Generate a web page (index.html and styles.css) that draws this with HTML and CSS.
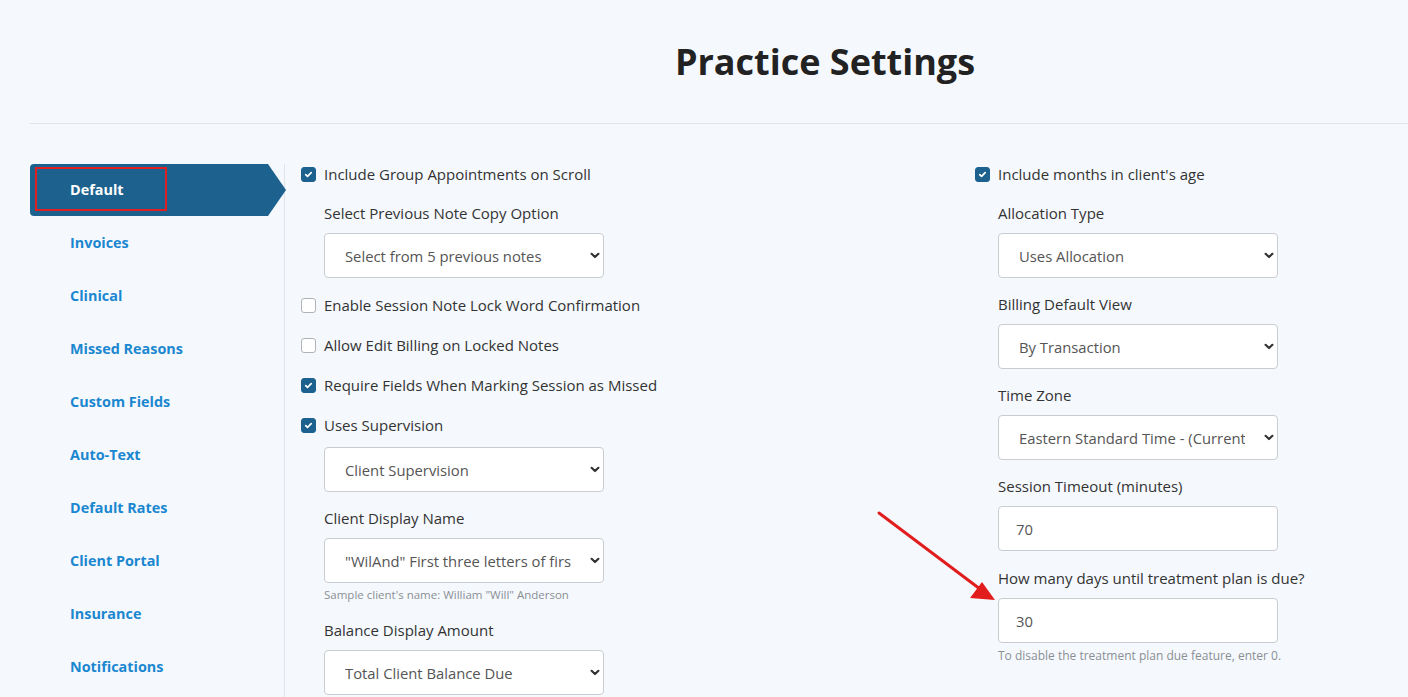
FILE: index.html
```html
<!DOCTYPE html>
<html lang="en">
<head>
    <meta charset="UTF-8">
    <meta name="viewport" content="width=device-width, initial-scale=1.0">
    <title>Practice Settings</title>
    <link rel="stylesheet" href="styles.css">
</head>
<body>
<div class="page">
    <div class="header">
        <h1 class="title">Practice Settings</h1>
    </div>

    <div class="main">
        <ul class="side-nav">
            <li class="active"><span class="mark"></span>Default</li>
            <li>Invoices</li>
            <li>Clinical</li>
            <li>Missed Reasons</li>
            <li>Custom Fields</li>
            <li>Auto-Text</li>
            <li>Default Rates</li>
            <li>Client Portal</li>
            <li>Insurance</li>
            <li>Notifications</li>
        </ul>

        <div class="content">
            <div class="col col-left">
                <label class="check-row"><span class="box checked"></span>Include Group Appointments on Scroll</label>

                <div class="field after-check">
                    <div class="field-label">Select Previous Note Copy Option</div>
                    <select class="control">
                        <option>Select from 5 previous notes</option>
                    </select>
                </div>

                <label class="check-row after-field"><span class="box"></span>Enable Session Note Lock Word Confirmation</label>
                <label class="check-row"><span class="box"></span>Allow Edit Billing on Locked Notes</label>
                <label class="check-row"><span class="box checked"></span>Require Fields When Marking Session as Missed</label>
                <label class="check-row"><span class="box checked"></span>Uses Supervision</label>

                <select class="control sub-control">
                    <option>Client Supervision</option>
                </select>

                <div class="field after-field">
                    <div class="field-label">Client Display Name</div>
                    <select class="control">
                        <option>"WilAnd" First three letters of first and last name</option>
                    </select>
                    <div class="hint">Sample client's name: William "Will" Anderson</div>
                </div>

                <div class="field after-hint">
                    <div class="field-label">Balance Display Amount</div>
                    <select class="control">
                        <option>Total Client Balance Due</option>
                    </select>
                </div>
            </div>

            <div class="col col-right">
                <label class="check-row"><span class="box checked"></span>Include months in client's age</label>

                <div class="field after-check">
                    <div class="field-label">Allocation Type</div>
                    <select class="control">
                        <option>Uses Allocation</option>
                    </select>
                </div>

                <div class="field after-field">
                    <div class="field-label">Billing Default View</div>
                    <select class="control">
                        <option>By Transaction</option>
                    </select>
                </div>

                <div class="field after-field">
                    <div class="field-label">Time Zone</div>
                    <select class="control">
                        <option>Eastern Standard Time - (Current: UTC-05:00)</option>
                    </select>
                </div>

                <div class="field after-field">
                    <div class="field-label">Session Timeout (minutes)</div>
                    <input class="control" type="text" value="70">
                </div>

                <div class="field after-label">
                    <div class="field-label">How many days until treatment plan is due?</div>
                    <input class="control" type="text" value="30">
                    <div class="hint">To disable the treatment plan due feature, enter 0.</div>
                </div>
            </div>
        </div>
    </div>
</div>

<!-- annotation arrow -->
<svg class="annot-arrow" width="140" height="110" viewBox="0 0 140 110">
    <line x1="3" y1="3" x2="104" y2="79" stroke="#e21d1d" stroke-width="3" stroke-linecap="round"/>
    <polygon points="119,90 94,88 106,72" fill="#e21d1d"/>
</svg>
</body>
</html>
```

FILE: styles.css
```css
*{
    margin: 0;
    padding: 0;
    box-sizing: border-box;
}
body{
    background: #f5f9fd;
    font-family: "Open Sans", "Liberation Sans", sans-serif;
    color: #333;
    font-size: 14px;
    overflow: hidden;
}
.page{
    padding-left: 30px;
}
.header{
    height: 124px;
    border-bottom: 1px solid #e1e5ea;
    padding-top: 38px;
    padding-left: 212px;
    text-align: center;
}
.title{
    font-size: 36px;
    font-weight: 700;
    line-height: 48px;
    color: #222;
}
.main{
    display: flex;
    padding-top: 40px;
}

/* left menu */
.side-nav{
    list-style: none;
    width: 255px;
    flex-shrink: 0;
    border-right: 1px solid #dfe4ea;
    min-height: 560px;
}
.side-nav>li{
    height: 53px;
    line-height: 52px;
    padding-left: 40px;
    font-weight: 700;
    font-size: 14.4px;
    color: #1b87d0;
}
.side-nav>li.active{
    position: relative;
    width: 256px;
    height: 52px;
    line-height: 51px;
    margin-bottom: 1px;
    color: #fff;
    background: #1d628e;
    border-radius: 4px 0 0 4px;
    clip-path: polygon(0 0, 238px 0, 256px 50%, 238px 100%, 0 100%);
}
.side-nav .mark{
    position: absolute;
    left: 5px;
    top: 3px;
    width: 132px;
    height: 44px;
    border: 2px solid #e02020;
}

/* form columns */
.content{
    display: flex;
    padding-left: 16px;
}
.col{
    display: flex;
    flex-direction: column;
}
.col-left{
    width: 674px;
}
.col-right{
    width: 420px;
}
.check-row{
    display: flex;
    align-items: center;
    height: 20px;
    font-size: 15px;
    color: #333;
}
.check-row + .check-row{
    margin-top: 20px;
}
.box{
    width: 15px;
    height: 15px;
    border: 1px solid #b0b3b7;
    border-radius: 3px;
    background: #fff;
    margin-right: 8px;
    flex-shrink: 0;
}
.box.checked{
    border-color: #1d628e;
    background: #1d628e url("data:image/svg+xml;utf8,<svg xmlns='http://www.w3.org/2000/svg' width='15' height='15' viewBox='0 0 15 15'><path d='M4.3 7.6l2.1 2.1 4.2-4.3' fill='none' stroke='white' stroke-width='2' stroke-linecap='round' stroke-linejoin='round'/></svg>") center/13px 13px no-repeat;
}
.field{
    display: flex;
    flex-direction: column;
    padding-left: 23px;
}
.field-label{
    height: 20px;
    line-height: 19px;
    font-size: 15px;
    margin-bottom: 9px;
    white-space: nowrap;
}
.control{
    width: 280px;
    height: 45px;
    border: 1px solid #c9cdd1;
    border-radius: 4px;
    background: #fff;
    padding-left: 20px;
    font-family: inherit;
    font-size: 14.8px;
    color: #555;
    outline: none;
}
select.control{
    appearance: none;
    -webkit-appearance: none;
    padding-right: 32px;
    background: #fff url("data:image/svg+xml;utf8,<svg xmlns='http://www.w3.org/2000/svg' width='10' height='7' viewBox='0 0 10 7'><path d='M1.6 1.8l3.4 3.2 3.4-3.2' fill='none' stroke='%23333' stroke-width='2.2' stroke-linecap='round' stroke-linejoin='round'/></svg>") right 3px center/10px 7px no-repeat;
}
input.control{
    padding-left: 17px;
}
.sub-control{
    margin-left: 23px;
    margin-top: 12px;
}
.after-check{
    margin-top: 20px;
}
.after-field{
    margin-top: 17px;
}
.after-label{
    margin-top: 18px;
}
.after-hint{
    margin-top: 19px;
}
.hint{
    margin-top: 5px;
    font-size: 11.5px;
    line-height: 14px;
    color: #8a8f95;
}
.col-right .hint{
    margin-top: 6px;
    font-size: 12px;
}

/* annotation */
.annot-arrow{
    position: absolute;
    left: 876px;
    top: 510px;
}
```
